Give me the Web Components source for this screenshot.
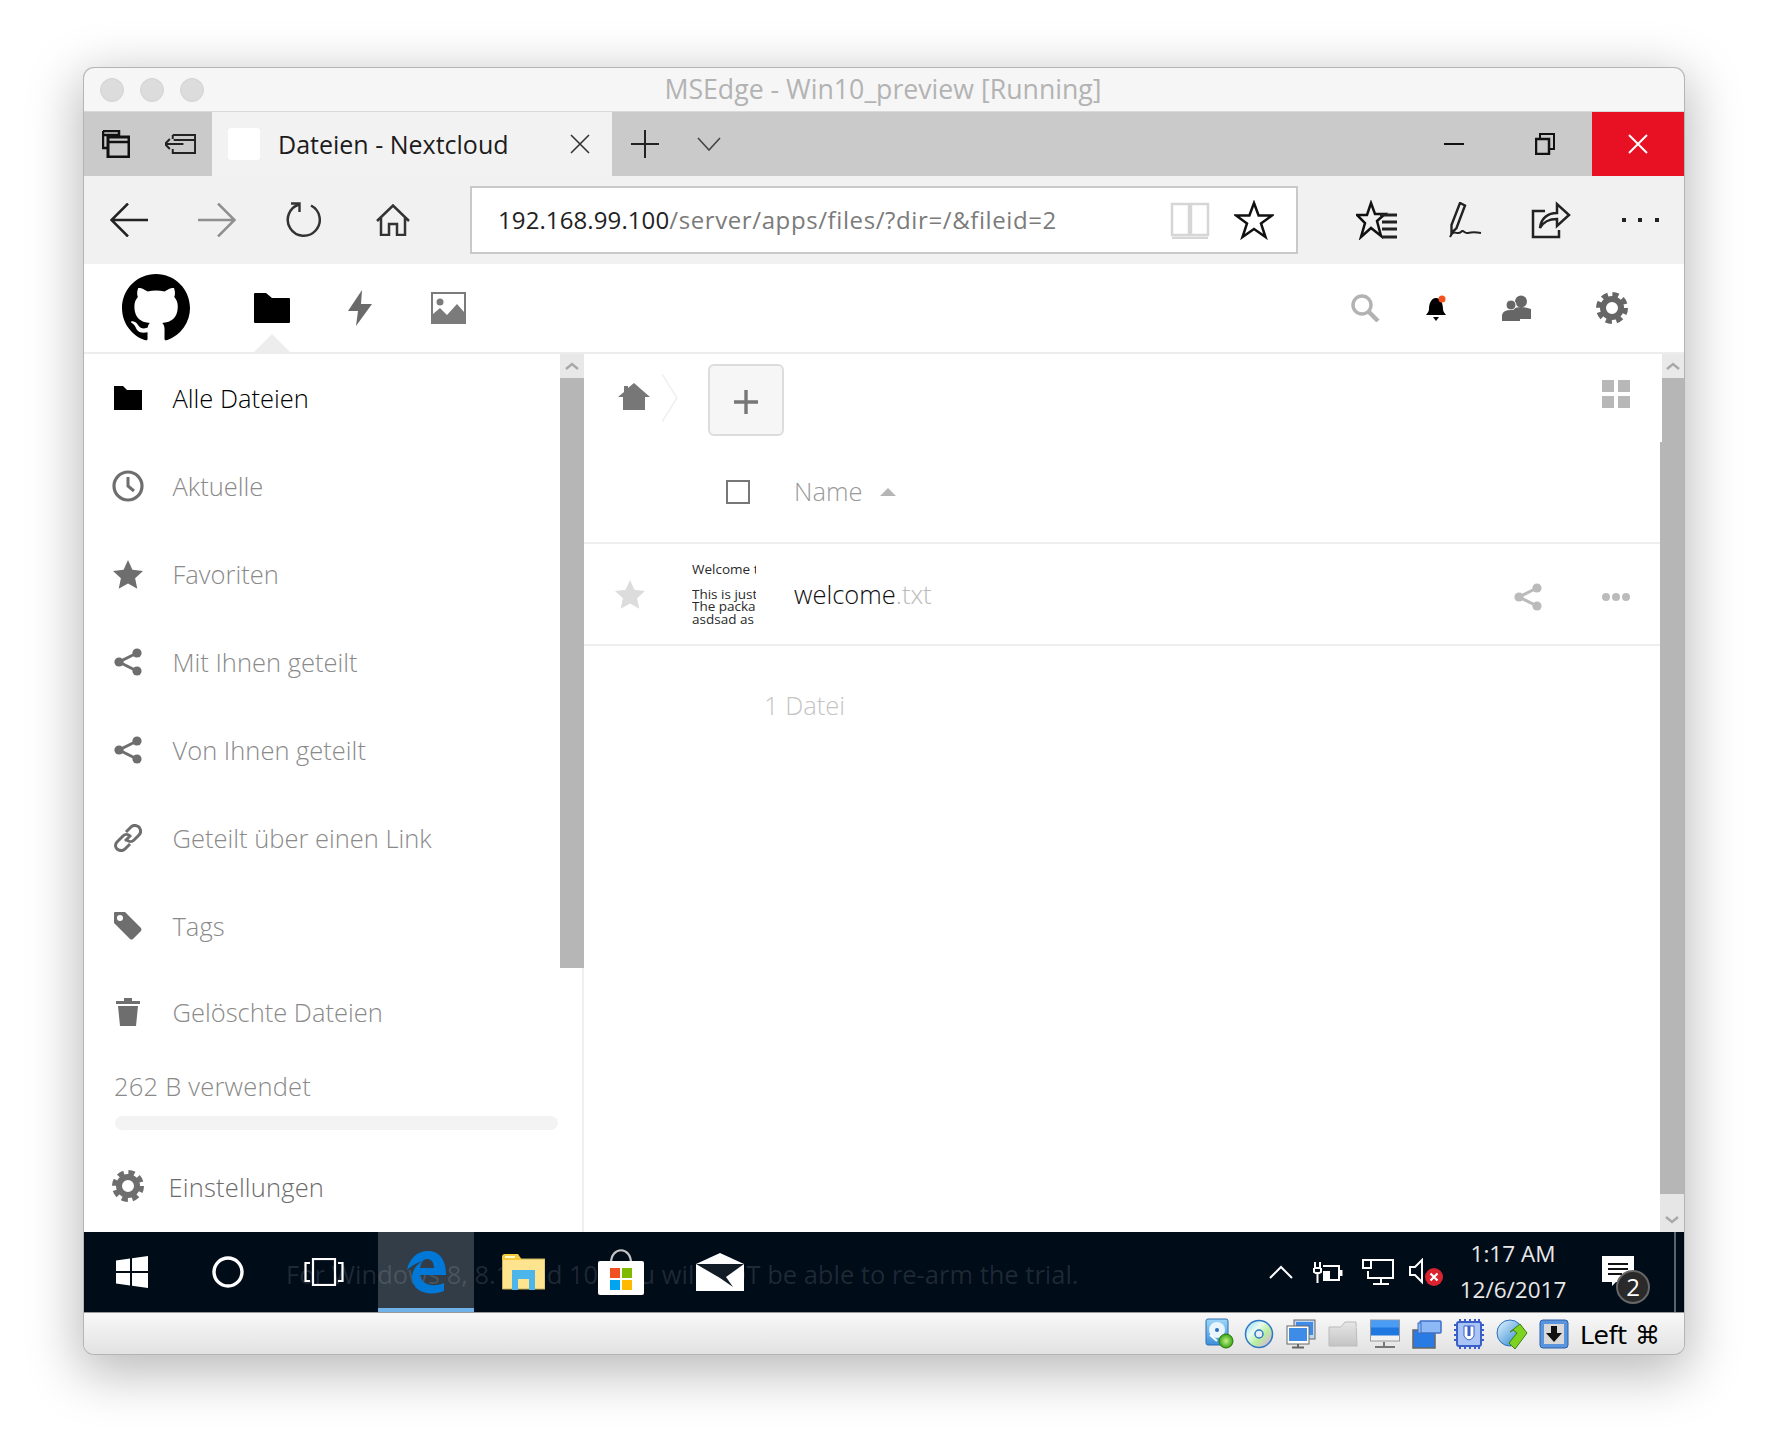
<!DOCTYPE html>
<html><head><meta charset="utf-8"><title>MSEdge - Win10_preview</title>
<style>
html,body{margin:0;padding:0;background:#fff;height:1454px;overflow:hidden;font-family:"Open Sans","Liberation Sans",sans-serif}
body{padding:68px 0 0 84px;box-sizing:border-box}
</style></head><body>
<mac-window title="MSEdge - Win10_preview [Running]">
  <edge-tabstrip></edge-tabstrip>
  <edge-toolbar></edge-toolbar>
  <nc-header></nc-header>
  <nc-content></nc-content>
  <win-taskbar></win-taskbar>
  <vbox-status></vbox-status>
</mac-window>
<script>
const G=(s,w=2.5)=>`fill="none" stroke="${s}" stroke-width="${w}"`;
const gear=c=>`<circle cx="16" cy="16" r="9" fill="none" stroke="${c}" stroke-width="6"/><circle cx="16" cy="16" r="13.5" fill="none" stroke="${c}" stroke-width="5" stroke-dasharray="6.1 4.5"/>`;
const share=c=>`<path d="M23 5L5 14L23 23" fill="none" stroke="${c}" stroke-width="3"/><circle cx="23" cy="5" r="4.6" fill="${c}"/><circle cx="5" cy="14" r="4.6" fill="${c}"/><circle cx="23" cy="23" r="4.6" fill="${c}"/>`;
const starD="M15 0L19.4 9.8L30 11L22.1 18.2L24.3 28.8L15 23.4L5.7 28.8L7.9 18.2L0 11L10.6 9.8z";
const ICONS={
 tabs:['0 0 28 28',`<path d="M1 1H17V6M1 1V18H6M1 5H17" ${G('#111')}/><rect x="6" y="7" width="21" height="20" ${G('#111',3)}/><path d="M6 12H27" ${G('#111')}/>`],
 aside:['0 0 32 20',`<path d="M8 1H31V19H8V15M8 5V1M9 6H31" ${G('#222',2)}/><path d="M0 10H19M5 5L0 10L5 15" ${G('#222',2)}/>`],
 x:['0 0 20 20',`<path d="M1 1L19 19M19 1L1 19" ${G('#333',1.6)}/>`],
 xw:['0 0 20 20',`<path d="M1 1L19 19M19 1L1 19" ${G('#fff',2)}/>`],
 plus:['0 0 28 28',`<path d="M14 0V28M0 14H28" ${G('#222',2)}/>`],
 chev:['0 0 24 14',`<path d="M1 1L12 13L23 1" ${G('#444',1.6)}/>`],
 min:['0 0 20 2',`<rect width="20" height="2.5" fill="#111"/>`],
 restore:['0 0 20 22',`<rect x="1" y="6" width="13" height="15" ${G('#111')}/><path d="M5 6V1H19V16H14" ${G('#111',2)}/>`],
 back:['0 0 38 34',`<path d="M38 17H2M18 0.5L1.5 17L18 33.5" ${G('#222')}/>`],
 fwd:['0 0 38 34',`<path d="M0 17H36M20 0.5L36.5 17L20 33.5" ${G('#8f8f8f')}/>`],
 refresh:['0 0 36 36',`<path d="M13 2.5A16 16 0 1 0 25 3.5" ${G('#333')}/><path d="M5 1.5H13.5V10" ${G('#333',2.4)}/>`],
 home:['0 0 34 32',`<path d="M1 17L17 1.5L33 17M5 13.5V31H13V20H21V31H29V13.5" ${G('#333')}/>`],
 reader:['0 0 40 38',`<path d="M2 3H19V34H2zM21 3H38V34H21zM2 37H38" ${G('#d6d6d6')}/>`],
 star:['0 0 40 40',`<path d="M20 3L24.6 15.5H38L27 23.5L31.5 37L20 29L8.5 37L13 23.5L2 15.5H15.4z" ${G('#111')}/>`],
 hub:['0 0 42 40',`<path d="M15 3L19 14H29L21 21L25 36L15 28L5 37L9 23L1 15H11z" ${G('#111')}/><path d="M24 15H41M26 22H41M26 29H41M26 37H41" ${G('#222',3)}/>`],
 pen:['0 0 34 36',`<path d="M12 1L17 3.5L8.5 26L3.5 31L3.5 23z" ${G('#222',2.4)}/><path d="M2 35C6 26 9 34 13 30C15 27 17 32 20 31C24 30 27 30 33 31" ${G('#222',2)}/>`],
 shareb:['0 0 40 38',`<path d="M14 10H2V36H28V29" ${G('#222')}/><path d="M9 27C10 17 17 12 26 12V3L38 14L26 25V18C18 18 13 20 9 27z" ${G('#222')}/>`],
 dots:['0 0 37 4',`<rect width="4" height="4" fill="#222"/><rect x="16" width="4" height="4" fill="#222"/><rect x="33" width="4" height="4" fill="#222"/>`],
 github:['0 0 16 16',`<path fill="#000" d="M8 0C3.58 0 0 3.58 0 8c0 3.54 2.29 6.53 5.47 7.59.4.07.55-.17.55-.38 0-.19-.01-.82-.01-1.49-2.01.37-2.53-.49-2.69-.94-.09-.23-.48-.94-.82-1.13-.28-.15-.68-.52-.01-.53.63-.01 1.08.58 1.23.82.72 1.21 1.87.87 2.33.66.07-.52.28-.87.51-1.07-1.78-.2-3.64-.89-3.64-3.95 0-.87.31-1.59.82-2.15-.08-.2-.36-1.02.08-2.12 0 0 .67-.21 2.2.82.64-.18 1.32-.27 2-.27.68 0 1.36.09 2 .27 1.53-1.04 2.2-.82 2.2-.82.44 1.1.16 1.92.08 2.12.51.56.82 1.27.82 2.15 0 3.07-1.87 3.75-3.65 3.95.29.25.54.73.54 1.48 0 1.07-.01 1.93-.01 2.2 0 .21.15.46.55.38A8.013 8.013 0 0016 8c0-4.42-3.58-8-8-8z"/>`],
 folder:['0 0 36 30',`<path fill="#000" d="M0 1Q0 0 1 0H12L18 5H35Q36 5 36 6V29Q36 30 35 30H1Q0 30 0 29z"/>`],
 bolt:['0 0 24 36',`<path fill="#6a6a6a" d="M14 0L0 21H10L8 36L24 14H13z"/>`],
 image:['0 0 35 32',`<rect width="35" height="32" fill="#7b7b7b"/><rect x="2" y="2" width="31" height="28" fill="#fff"/><circle cx="9" cy="10" r="3.5" fill="#7b7b7b"/><path fill="#7b7b7b" d="M2 30V22L9 16L16 23L26 12L33 20V30z"/>`],
 search:['0 0 29 28',`<circle cx="11" cy="11" r="9" ${G('#b3b3b3',3.5)}/><path d="M17 17L27 27" ${G('#b3b3b3',4.5)}/>`],
 bell:['0 0 22 26',`<path d="M11 3C6 3 4 9 4 14C4 17 2 18 1 20H21C20 18 18 17 18 14C18 9 16 3 11 3z" fill="#000"/><path d="M8 22H14L11 26z" fill="#000"/><circle cx="17" cy="4" r="3.5" fill="#f4511e"/>`],
 contacts:['0 0 30 26',`<circle cx="19" cy="6.5" r="6" fill="#666"/><path d="M10 14Q19 10 29 14V24H10z" fill="#666"/><circle cx="9" cy="10" r="5" fill="#666" stroke="#fff" stroke-width="1"/><path d="M0 20Q1 15 9 15Q17 15 18 20V26H0z" fill="#666"/>`],
 gear:['0 0 32 32',gear('#666')],
 navfolder:['0 0 28 24',`<path fill="#000" d="M0 0H9L13 4H28V24H0z"/>`],
 clock:['0 0 32 32',`<circle cx="16" cy="16" r="14" ${G('#6e6e6e',3.2)}/><path d="M16 7V16L22 21" fill="none" stroke="#6e6e6e" stroke-width="3"/>`],
 navstar:['0 0 30 29',`<path fill="#6e6e6e" d="${starD}"/>`],
 navshare:['0 0 28 28',share('#6e6e6e')],
 link:['0 0 28 28',`<path d="M11 17L17 11M12 8L17 3C19 1 22 1 25 3C27 6 27 9 25 11L20 16C18 18 15 18 13 16M16 12C14 10 11 10 9 12L3 18C1 20 1 23 3 25C6 27 9 27 11 25L16 20" ${G('#6e6e6e',3)}/>`],
 tag:['0 0 28 28',`<path fill-rule="evenodd" fill="#6e6e6e" d="M1 0H11L27 16Q28 18 27 19L19 27Q17 28 16 27L0 11V1Q0 0 1 0zM6 3A3 3 0 1 0 6 9A3 3 0 1 0 6 3z"/>`],
 trash:['0 0 24 28',`<path fill="#6e6e6e" d="M0 3H8V0H16V3H24V6H0zM2 8H22L20 28H4z"/>`],
 navgear:['0 0 32 32',gear('#6e6e6e')],
 crumbhome:['0 0 32 27',`<path fill="#777" d="M16 0L32 14H27V27H5V14H0L6 9V3H10V5z"/>`],
 crumbsep:['0 0 16 48',`<path d="M0 0L15 24L0 48" ${G('#efefef',1.5)}/>`],
 addplus:['0 0 24 24',`<path d="M12 0V24M0 12H24" ${G('#777',3.4)}/>`],
 sort:['0 0 16 8',`<path fill="#b5b5b5" d="M8 0L16 8H0z"/>`],
 filestar:['0 0 30 29',`<path fill="#dcdcdc" d="${starD}"/>`],
 grid:['0 0 28 28',`<g fill="#b8b8b8"><rect width="12" height="12"/><rect x="16" width="12" height="12"/><rect y="16" width="12" height="12"/><rect x="16" y="16" width="12" height="12"/></g>`],
 fileshare:['0 0 28 28',share('#bbb')],
 more:['0 0 28 8',`<g fill="#bbb"><circle cx="4" cy="4" r="4"/><circle cx="14" cy="4" r="4"/><circle cx="24" cy="4" r="4"/></g>`],
 sup:['0 0 14 8',`<path d="M1 7L7 2L13 7" ${G('#a8a8a8',2.4)}/>`],
 sdown:['0 0 14 8',`<path d="M1 1L7 6L13 1" ${G('#a8a8a8',2.4)}/>`],
 win:['0 0 32 32',`<path fill="#fff" d="M0 4.5L14 2.6V15H0zM16 2.3L32 0V15H16zM0 17H14V29.4L0 27.5zM16 17H32V32L16 29.7z"/>`],
 cortana:['0 0 32 32',`<circle cx="16" cy="16" r="14" ${G('#fff',3.4)}/>`],
 taskview:['0 0 40 28',`<rect x="9" y="1" width="22" height="26" ${G('#fff',2.2)}/><path d="M6 5H1.5V23H6M34 5H38.5V23H34" ${G('#fff',2.2)}/>`],
 edge:['0 0 40 44',`<path fill="#0078d7" d="M1 20C3 9 11 1 22 1C33 1 40 9 40 25H14C15 34 26 38 38 33V41C24 47 5 42 6 26C7 19 11 14 17 11C13 12 6 15 1 20zM14 18H28C28 13 26 9 21 9C17 9 15 13 14 18z"/>`],
 explorer:['0 0 43 36',`<path fill="#ffe48f" stroke="#c9b15e" d="M0.5 5H43V35H0.5z"/><path fill="#f7c93f" d="M0 3Q0 0 3 0H16L20 6H0z"/><rect x="3" y="2" width="10" height="2" fill="#ffffc8"/><path fill="#4cb6ea" d="M10 36V16H33V36H27V25H16V36z"/>`],
 store:['0 0 46 46',`<path d="M13 14C13 -3 33 -3 33 14" ${G('#c4c4c4',2.2)}/><rect y="12" width="46" height="34" rx="2" fill="#fff"/><rect x="12" y="19" width="10" height="10" fill="#f25022"/><rect x="24" y="19" width="10" height="10" fill="#7fba00"/><rect x="12" y="31" width="10" height="10" fill="#00a4ef"/><rect x="24" y="31" width="10" height="10" fill="#ffb900"/>`],
 mail:['0 0 48 38',`<path fill="#fff" d="M0 11L24 0L48 11V38H0z"/><path fill="#111c26" d="M0 11H48L30 24L37 34L24 25z"/>`],
 chevu:['0 0 24 14',`<path d="M1 13L12 2L23 13" ${G('#fff',2)}/>`],
 plug:['0 0 32 22',`<path d="M3 7H10M6.5 11V22M3 7V11Q6.5 14 10 11V7M4 1V6M9 1V6" ${G('#fff',2)}/><path d="M12 5H28V19H12" ${G('#fff',2)}/><rect x="12" y="10" width="7" height="9" fill="#fff"/><rect x="29" y="9" width="2.5" height="6" fill="#fff"/>`],
 net:['0 0 32 26',`<path d="M1 1H31V19H6V12M19 19V25M11 25H27" ${G('#fff',2)}/><rect x="1" y="1" width="8" height="8" ${G('#fff',2)}/>`],
 spk:['0 0 34 28',`<path d="M1 9H6L13 2V24L6 17H1z" ${G('#fff',2)}/><circle cx="25" cy="19" r="9" fill="#d9232e"/><path d="M21.5 15.5L28.5 22.5M28.5 15.5L21.5 22.5" ${G('#fff',2.2)}/>`],
 note:['0 0 32 30',`<path fill="#fff" d="M0 0H32V26H14L10 30V26H0z"/><path d="M6 8H26M6 13H26M6 18H20" ${G('#111',2)}/>`],
 v1:['0 0 30 32',`<defs><linearGradient id="b1" x1="0" y1="0" x2="0" y2="1"><stop offset="0" stop-color="#9fd6f7"/><stop offset="1" stop-color="#3b8fdc"/></linearGradient><radialGradient id="g1"><stop offset="0" stop-color="#c5f28d"/><stop offset="1" stop-color="#36a510"/></radialGradient></defs><rect x="1" y="1" width="22" height="26" rx="2" fill="url(#b1)" stroke="#2c6fb5"/><circle cx="12" cy="12" r="8" fill="#e8f5fd"/><circle cx="12" cy="12" r="2" fill="#2c6fb5"/><path d="M5 17L12 23" stroke="#fff" stroke-width="2"/><circle cx="21" cy="23" r="7" fill="url(#g1)" stroke="#2a7a0c"/>`],
 v2:['0 0 30 30',`<defs><linearGradient id="b2" x1="0" y1="0" x2="1" y2="1"><stop offset="0" stop-color="#86d4f5"/><stop offset=".35" stop-color="#e8fbf0"/><stop offset=".6" stop-color="#b9ee9e"/><stop offset="1" stop-color="#e39ff0"/></linearGradient></defs><circle cx="15" cy="15" r="13.5" fill="url(#b2)" stroke="#2f78c8" stroke-width="1.5"/><circle cx="15" cy="15" r="4" fill="#e6eef7" stroke="#2f78c8" stroke-width="1.5"/>`],
 v3:['0 0 30 30',`<rect x="8" y="1" width="21" height="19" fill="#bfd6f0" stroke="#666"/><rect x="10" y="3" width="17" height="13" fill="#3f8ce8"/><rect x="1" y="7" width="22" height="18" fill="#fff" stroke="#666"/><rect x="3" y="9" width="18" height="13" fill="#3f8ce8"/><path d="M12 25V28M6 28.5H18" stroke="#666" stroke-width="2" fill="none"/>`],
 v4:['0 0 30 26',`<defs><linearGradient id="b4" x1="0" y1="0" x2="0" y2="1"><stop offset="0" stop-color="#e6e6e6"/><stop offset="1" stop-color="#c4c4c4"/></linearGradient></defs><path d="M1 6H13L17 1H28L29 25H1z" fill="url(#b4)" stroke="#bbb"/><path d="M13 6H29" stroke="#ddd"/>`],
 v5:['0 0 30 30',`<rect x="0.5" y="1" width="29" height="21" fill="#f2f2f2" stroke="#999"/><rect x="1" y="1.5" width="28" height="15" fill="#1f77e0"/><rect x="1" y="1.5" width="28" height="7" fill="#4b9cf5"/><path d="M14 23V27M5 28H25" stroke="#777" stroke-width="2" fill="none"/>`],
 v6:['0 0 30 30',`<rect x="1" y="11" width="22" height="18" fill="#2a7ae4" stroke="#666" stroke-width="1.5"/><rect x="8" y="2" width="21" height="12" rx="1" fill="#8cb9f5" stroke="#3f6fc8" stroke-width="1.5"/><rect x="6" y="4" width="3" height="10" fill="#8cb9f5" stroke="#3f6fc8"/>`],
 v7:['0 0 30 30',`<rect x="3" y="3" width="24" height="24" rx="2" fill="#a9c4f5" stroke="#3a5fc8" stroke-width="2"/><path d="M6 0V3M11 0V3M16 0V3M21 0V3M25 0V3M6 27V30M11 27V30M16 27V30M21 27V30M25 27V30M0 6H3M0 11H3M0 16H3M0 21H3M27 6H30M27 11H30M27 16H30M27 21H30" stroke="#3a5fc8" stroke-width="2"/><path d="M10 7H20V17Q15 25 10 17z" fill="#fff" stroke="#3a5fc8"/><rect x="13.5" y="7" width="3" height="10" fill="#3a5fc8"/>`],
 v8:['0 0 32 32',`<defs><linearGradient id="b8" x1="0" y1="0" x2="1" y2="1"><stop offset="0" stop-color="#e8f6fd"/><stop offset="1" stop-color="#1d7fd0"/></linearGradient></defs><circle cx="14" cy="15" r="13" fill="url(#b8)" stroke="#2a6fb8"/><path d="M14 14L24 6L31 15L19 31L13 25L21 15L17 12z" fill="#7ed321" stroke="#3e7d10"/>`],
 v9:['0 0 30 30',`<rect x="1" y="1" width="28" height="28" rx="3" fill="#5a94dc" stroke="#2a5fa8"/><rect x="5" y="5" width="20" height="20" fill="#d8d8d8"/><path d="M12 7H18V14H23L15 23L7 14H12z" fill="#111"/>`]
};
class UiIcon extends HTMLElement{
 connectedCallback(){
  const [vb,body]=ICONS[this.getAttribute('name')];
  const w=this.getAttribute('w'),h=this.getAttribute('h');
  this.attachShadow({mode:'open'}).innerHTML=`<style>:host{display:inline-flex;flex:none;width:${w}px;height:${h}px}svg{display:block;width:100%;height:100%}</style><svg viewBox="${vb}" preserveAspectRatio="none">${body}</svg>`;
 }
}
customElements.define('ui-icon',UiIcon);
function shell(tag,css,html){
 customElements.define(tag,class extends HTMLElement{
  connectedCallback(){ if(this.shadowRoot)return; this.attachShadow({mode:'open'}).innerHTML=`<style>${css}</style>${typeof html==='function'?html(this):html}`; }
 });
}
shell('mac-window',`
 :host{display:flex;flex-direction:column;width:1600px;height:1286px;box-sizing:border-box;border-radius:10px;overflow:hidden;background:#f6f6f6;box-shadow:0 0 0 1px #b4b4b4,0 14px 52px 6px rgba(0,0,0,.27);color:#222}
 .title{flex:none;height:43px;border-bottom:1px solid #d9d9d9;display:flex;align-items:center;position:relative;justify-content:center;font:26.7px/1 "Open Sans",sans-serif;color:#b3b3b3}
 .lights{position:absolute;left:16px;top:10px;display:flex;gap:16px}
 .lights i{display:block;width:24px;height:24px;border-radius:50%;background:#dcdcdc;border:1px solid #d2d2d2;box-sizing:border-box}
 .name{margin-left:-2px}
`,e=>`<div class="title"><div class="lights"><i></i><i></i><i></i></div><span class="name">${e.getAttribute('title')}</span></div><slot></slot>`);
shell('edge-tabstrip',`
 :host{display:flex;flex:none;height:64px;background:#cacaca;align-items:center}
 .tab{width:400px;height:64px;background:#f2f2f2;display:flex;align-items:center;flex:none;font:25px/1 "Open Sans",sans-serif;color:#1c1c1c}
 .fav{width:32px;height:32px;background:#fff;border-radius:3px;margin:0 18px 0 16px;flex:none}
 .txt{width:248px;white-space:nowrap;padding-top:1px;flex:none}
 .close{width:92px;height:64px;background:#e81123;display:flex;align-items:center;justify-content:center}
`,`<ui-icon name="tabs" w="28" h="28" style="margin-left:18px"></ui-icon><ui-icon name="aside" w="31" h="20" style="margin-left:35px;margin-right:16px"></ui-icon>
 <div class="tab"><div class="fav"></div><span class="txt">Dateien - Nextcloud</span><ui-icon name="x" w="20" h="20" style="margin-left:44px"></ui-icon></div>
 <ui-icon name="plus" w="28" h="28" style="margin-left:19px"></ui-icon>
 <ui-icon name="chev" w="24" h="14" style="margin-left:38px"></ui-icon>
 <ui-icon name="min" w="20" h="2" style="margin-left:723px"></ui-icon>
 <ui-icon name="restore" w="20" h="22" style="margin-left:71px"></ui-icon>
 <div class="close" style="margin-left:37px"><ui-icon name="xw" w="20" h="20"></ui-icon></div>`);
shell('edge-toolbar',`
 :host{display:flex;flex:none;height:88px;background:#f1f1f1;align-items:center}
 .addr{flex:none;box-sizing:border-box;width:828px;height:68px;margin:0 0 0 60px;border:2px solid #c9c9c9;background:#fff;display:flex;align-items:center;padding-left:26px;font:24px/1 "Open Sans",sans-serif;color:#7b7b7b;white-space:nowrap}
 b{font-weight:400;color:#222;letter-spacing:.1px}
 .u{width:672px;letter-spacing:.6px;flex:none}
`,`<ui-icon name="back" w="38" h="34" style="margin-left:26px"></ui-icon>
 <ui-icon name="fwd" w="38" h="34" style="margin-left:50px"></ui-icon>
 <ui-icon name="refresh" w="36" h="36" style="margin-left:50px"></ui-icon>
 <ui-icon name="home" w="34" h="32" style="margin-left:54px"></ui-icon>
 <div class="addr"><span class="u"><b>192.168.99.100</b>/server/apps/files/?dir=/&amp;fileid=2</span><ui-icon name="reader" w="40" h="38"></ui-icon><ui-icon name="star" w="40" h="40" style="margin-left:24px"></ui-icon></div>
 <ui-icon name="hub" w="42" h="40" style="margin-left:58px"></ui-icon>
 <ui-icon name="pen" w="34" h="36" style="margin-left:50px"></ui-icon>
 <ui-icon name="shareb" w="40" h="38" style="margin-left:49px"></ui-icon>
 <ui-icon name="dots" w="37" h="4" style="margin-left:51px"></ui-icon>`);
shell('nc-header',`
 :host{display:flex;flex:none;height:90px;box-sizing:border-box;background:#fff;border-bottom:2px solid #ededed;align-items:center;position:relative}
 .tip{position:absolute;left:170px;bottom:0;width:0;height:0;border-left:18px solid transparent;border-right:18px solid transparent;border-bottom:18px solid #ededed}
`,`<ui-icon name="github" w="68" h="68" style="margin-left:38px"></ui-icon>
 <ui-icon name="folder" w="36" h="30" style="margin-left:64px"></ui-icon>
 <ui-icon name="bolt" w="24" h="36" style="margin-left:58px"></ui-icon>
 <ui-icon name="image" w="35" h="32" style="margin-left:59px"></ui-icon>
 <ui-icon name="search" w="29" h="28" style="margin-left:885px"></ui-icon>
 <ui-icon name="bell" w="22" h="26" style="margin-left:45px"></ui-icon>
 <ui-icon name="contacts" w="30" h="26" style="margin-left:55px"></ui-icon>
 <ui-icon name="gear" w="32" h="32" style="margin-left:64px"></ui-icon>
 <div class="tip"></div>`);
shell('nav-item',`
 :host{display:flex;height:var(--h,88px);align-items:center;flex:none;font:300 25.5px/1 "Open Sans",sans-serif;color:#8a8a8a;white-space:nowrap}
 :host([active]){color:#000}
 .i{width:32px;margin-left:28px;display:flex;justify-content:center;flex:none}
 .t{margin-left:var(--gap,28.5px);padding-top:var(--pt,1px);letter-spacing:var(--ls,0)}
`,`<div class="i"><slot name="icon"></slot></div><div class="t"><slot></slot></div>`);
shell('nc-sidebar',`
 :host{display:flex;flex:none;width:500px;background:#fff}
 .c{width:476px;flex:none;display:flex;flex-direction:column}
 .used{font:300 25.5px/26px "Open Sans",sans-serif;color:#8a8a8a;margin:19px 0 0 30px;white-space:nowrap;letter-spacing:.22px}
 .bar{height:14px;margin:17px 0 0 31px;width:443px;background:#f3f3f3;border-radius:7px}
 .sb{width:24px;flex:none;display:flex;flex-direction:column;box-sizing:border-box;border-right:2px solid #efefef}
 .up{height:24px;background:#e8e8e8;width:24px;display:flex;align-items:center;justify-content:center}
 .th{height:590px;background:#b6b6b6;width:24px}
`,`<div class="c"><slot></slot>
 <div class="used">262 B verwendet</div><div class="bar"></div><div style="height:41px"></div>
 <nav-item style="--gap:24.5px;--pt:3px;--ls:.18px;color:#6b6b6b;--h:30px"><ui-icon slot="icon" name="navgear" w="32" h="32"></ui-icon>Einstellungen</nav-item>
 </div><div class="sb"><div class="up"><ui-icon name="sup" w="14" h="8"></ui-icon></div><div class="th"></div></div>`);
shell('file-row',`
 :host{display:flex;align-items:center;flex:none;height:102px;box-sizing:border-box;border-bottom:2px solid #eeeeee;background:#fff}
 .thumb{width:64px;height:66px;overflow:hidden;margin:0 0 0 47px;font:13.5px/12.4px "Open Sans",sans-serif;color:#2a2a2a;white-space:nowrap;flex:none}
 .thumb div{height:12.4px}
 .name{width:720px;margin:2px 0 0 38px;font:300 25.5px/1 "Open Sans",sans-serif;color:#111;white-space:nowrap;flex:none}
 .name i{font-style:normal;color:#bbb}
`,`<ui-icon name="filestar" w="30" h="29" style="margin-left:31px"></ui-icon>
 <div class="thumb"><div style="margin-top:2px">Welcome t</div><div></div><div style="margin-top:0">This is just</div><div>The packa</div><div>asdsad as</div></div>
 <div class="name">welcome<i>.txt</i></div>
 <ui-icon name="fileshare" w="28" h="28" style="margin-top:5px"></ui-icon>
 <ui-icon name="more" w="28" h="8" style="margin:5px 0 0 60px"></ui-icon>`);
shell('nc-files',`
 :host{display:flex;flex:1;min-width:0;background:#fff}
 .c{width:1076px;flex:none;display:flex;flex-direction:column}
 .crumb{height:88px;display:flex;align-items:flex-start;flex:none}
 .add{box-sizing:border-box;width:76px;height:72px;margin:10px 0 0 30px;background:#f6f6f6;border:2px solid #dcdcdc;border-radius:6px;display:flex;align-items:center;justify-content:center;flex:none;padding-top:4px}
 .head{height:102px;box-sizing:border-box;flex:none;display:flex;align-items:center;border-bottom:2px solid #eeeeee;font:300 25.5px/1 "Open Sans",sans-serif;color:#9a9a9a}
 .cb{box-sizing:border-box;width:24px;height:24px;border:2px solid #777;margin-left:142px;flex:none}
 .count{font:300 25.5px/1 "Open Sans",sans-serif;color:#c4c4c4;margin:47px 0 0 180px;white-space:nowrap}
 .sb{width:24px;flex:none;display:flex;flex-direction:column;align-items:flex-end}
 .up{height:24px;width:22px;background:#e9e9e9;display:flex;align-items:center;justify-content:center}
 .t1{height:64px;width:22px;background:#b6b6b6}
 .t2{height:752px;width:24px;background:#b6b6b6}
 .dn{flex:1;width:24px;background:#e6e6e6;display:flex;align-items:flex-end;justify-content:center;padding-bottom:8px;box-sizing:border-box}
`,`<div class="c"><div class="crumb">
  <ui-icon name="crumbhome" w="32" h="27" style="margin:29px 0 0 34px"></ui-icon>
  <ui-icon name="crumbsep" w="16" h="48" style="margin:20px 0 0 12px"></ui-icon>
  <div class="add"><ui-icon name="addplus" w="24" h="24"></ui-icon></div>
  <ui-icon name="grid" w="28" h="28" style="margin:26px 0 0 818px"></ui-icon>
 </div>
 <div class="head"><div class="cb"></div><span style="margin-left:44px">Name</span><ui-icon name="sort" w="16" h="8" style="margin-left:18px"></ui-icon></div>
 <file-row></file-row>
 <div class="count">1 Datei</div>
 </div>
 <div class="sb"><div class="up"><ui-icon name="sup" w="14" h="8"></ui-icon></div><div class="t1"></div><div class="t2"></div><div class="dn"><ui-icon name="sdown" w="14" h="8"></ui-icon></div></div>`);
shell('nc-content',`
 :host{display:flex;flex:none;height:878px;background:#fff;overflow:hidden}
`,`<nc-sidebar>
  <nav-item active><ui-icon slot="icon" name="navfolder" w="28" h="24"></ui-icon>Alle Dateien</nav-item>
  <nav-item><ui-icon slot="icon" name="clock" w="32" h="32"></ui-icon>Aktuelle</nav-item>
  <nav-item><ui-icon slot="icon" name="navstar" w="30" h="29"></ui-icon>Favoriten</nav-item>
  <nav-item><ui-icon slot="icon" name="navshare" w="28" h="28"></ui-icon>Mit Ihnen geteilt</nav-item>
  <nav-item><ui-icon slot="icon" name="navshare" w="28" h="28"></ui-icon>Von Ihnen geteilt</nav-item>
  <nav-item><ui-icon slot="icon" name="link" w="28" h="28"></ui-icon>Geteilt über einen Link</nav-item>
  <nav-item><ui-icon slot="icon" name="tag" w="28" h="28"></ui-icon>Tags</nav-item>
  <nav-item style="--h:84px"><ui-icon slot="icon" name="trash" w="24" h="28"></ui-icon>Gelöschte Dateien</nav-item>
 </nc-sidebar><nc-files></nc-files>`);
shell('win-taskbar',`
 :host{display:flex;flex:none;height:80px;background:#010c19;align-items:center;position:relative;color:#fff}
 .ghost{position:absolute;left:202px;top:27px;font:25.5px/1.2 "Open Sans",sans-serif;color:rgba(255,255,255,.12);white-space:nowrap}
 ui-icon{position:relative}
 .hi{flex:none;width:96px;height:80px;box-sizing:border-box;background:#323d47;border-bottom:4px solid #6fb1e9;display:flex;align-items:center;justify-content:center;margin-left:34px}
 .clock{flex:none;width:110px;margin-left:15px;text-align:center;font:22.5px/36px "Open Sans",sans-serif;position:relative;color:#e8e8e8;white-space:nowrap}
 .n{position:relative;flex:none;margin:16px 0 0 34px;width:50px;height:48px}
 .badge{position:absolute;left:14px;top:14px;width:34px;height:34px;box-sizing:border-box;border-radius:50%;background:#2a2a2a;border:2px solid #666;display:flex;align-items:center;justify-content:center;font:24px/1 "Open Sans",sans-serif;color:#fff}
 .vl{flex:none;width:2px;height:80px;background:#5a6470;margin-left:22px}
`,`<div class="ghost">For Windows 8, 8.1 and 10, you will NOT be able to re-arm the trial.</div>
 <ui-icon name="win" w="32" h="32" style="margin-left:32px"></ui-icon>
 <ui-icon name="cortana" w="32" h="32" style="margin-left:64px"></ui-icon>
 <ui-icon name="taskview" w="40" h="28" style="margin-left:60px"></ui-icon>
 <div class="hi"><ui-icon name="edge" w="40" h="44" style="top:2px"></ui-icon></div>
 <ui-icon name="explorer" w="43" h="36" style="margin-left:28px"></ui-icon>
 <ui-icon name="store" w="46" h="46" style="margin-left:53px"></ui-icon>
 <ui-icon name="mail" w="48" h="38" style="margin-left:52px"></ui-icon>
 <ui-icon name="chevu" w="24" h="14" style="margin-left:525px"></ui-icon>
 <ui-icon name="plug" w="32" h="22" style="margin-left:18px"></ui-icon>
 <ui-icon name="net" w="32" h="26" style="margin-left:19px"></ui-icon>
 <ui-icon name="spk" w="34" h="28" style="margin-left:15px"></ui-icon>
 <div class="clock">1:17 AM<br>12/6/2017</div>
 <div class="n"><ui-icon name="note" w="32" h="30"></ui-icon><div class="badge">2</div></div>
 <div class="vl"></div>`);
shell('vbox-status',`
 :host{display:flex;flex:1;align-items:center;background:linear-gradient(#f8f8f8,#e2e2e2);border-top:1px solid #999;padding-left:1121px;font:25px/1 "DejaVu Sans",sans-serif;color:#000;white-space:nowrap}
 ui-icon{margin-right:12px}
 .k{margin:4px 0 0 -1px}
`,`<ui-icon name="v1" w="30" h="32" style="margin-right:9px"></ui-icon><ui-icon name="v2" w="30" h="30"></ui-icon><ui-icon name="v3" w="30" h="30"></ui-icon><ui-icon name="v4" w="30" h="26"></ui-icon><ui-icon name="v5" w="30" h="30"></ui-icon><ui-icon name="v6" w="30" h="30"></ui-icon><ui-icon name="v7" w="30" h="30"></ui-icon><ui-icon name="v8" w="32" h="32" style="margin-right:11px"></ui-icon><ui-icon name="v9" w="30" h="30"></ui-icon><span class="k">Left ⌘</span>`);
</script></body></html>
